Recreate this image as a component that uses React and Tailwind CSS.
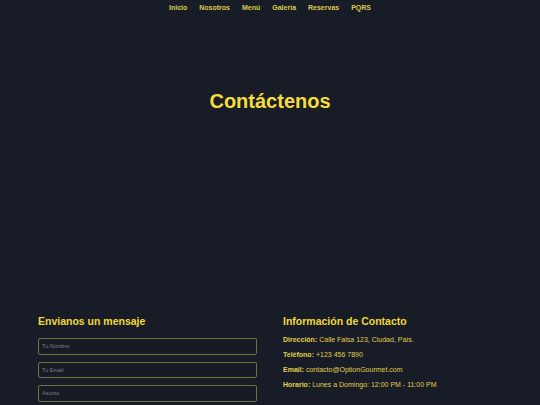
import React from 'react';

const links = ['Inicio', 'Nosotros', 'Menú', 'Galería', 'Reservas', 'PQRS'];

const info = [
  ['Dirección:', 'Calle Falsa 123, Ciudad, País.'],
  ['Teléfono:', '+123 456 7890'],
  ['Email:', 'contacto@OptionGourmet.com'],
  ['Horario:', 'Lunes a Domingo: 12:00 PM - 11:00 PM'],
];

const App = () => {
  return (
    <div className="min-h-[405px] bg-[#181c27] overflow-hidden" style={{ fontFamily: '"Liberation Sans", Arial, sans-serif' }}>
      {/* Nav */}
      <nav className="flex justify-center gap-[12px] pt-[4px] h-[15px]">
        {links.map((l) => (
          <a key={l} className="text-[7px] leading-[8px] font-bold text-[#dccb4c]">{l}</a>
        ))}
      </nav>

      {/* Title */}
      <h1 className="mt-[74px] text-center text-[20px] leading-[24px] font-bold text-[#f5dc3a]">Contáctenos</h1>

      {/* Contact */}
      <div className="mt-[202px] w-[464px] mx-auto grid grid-cols-2 gap-[26px]">
        <div>
          <h2 className="text-[10.5px] leading-[12px] font-bold text-[#f0d83c] mb-[11px]">Envianos un mensaje</h2>
          <div className="flex flex-col gap-[7px]">
            {['Tu Nombre', 'Tu Email', 'Asunto'].map((p) => (
              <input
                key={p}
                placeholder={p}
                className="h-[16.5px] w-full rounded-[2px] border border-[#75703f] bg-[#171b26] px-[3px] text-[5.5px] text-gray-300 placeholder:text-[#7c7f88] outline-none"
              />
            ))}
          </div>
        </div>
        <div>
          <h2 className="text-[10.5px] leading-[12px] font-bold text-[#f0d83c] mb-[8px]">Información de Contacto</h2>
          <div className="flex flex-col gap-[6px]">
            {info.map(([k, v]) => (
              <p key={k} className="text-[7px] leading-[9px] text-[#e0ce4c]">
                <span className="font-bold">{k}</span> {v}
              </p>
            ))}
          </div>
        </div>
      </div>
    </div>
  );
};

export default App;
